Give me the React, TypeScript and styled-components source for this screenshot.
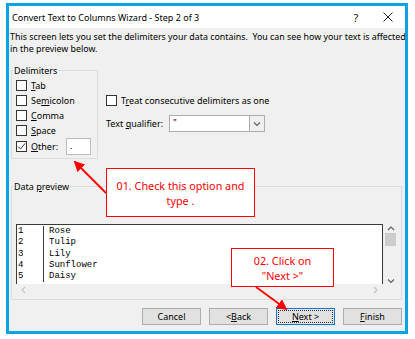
import React from 'react'
import styled, { createGlobalStyle } from 'styled-components'

const GlobalStyle = createGlobalStyle`
  html, body {
    margin: 0;
    padding: 0;
    background: #ffffff;
  }
  body {
    font-family: 'Noto Sans', 'Open Sans', sans-serif;
    color: #000;
  }
`

const Page = styled.div`
  width: 415px;
  height: 339px;
  padding: 3px 0 0 6px;
  box-sizing: border-box;
`

const Frame = styled.div`
  position: relative;
  width: 402px;
  height: 331px;
  box-sizing: border-box;
  border: 3px solid #0aa3e6;
  background: #f0f0f0;
  display: flex;
  flex-direction: column;
  overflow: hidden;
`

const TitleBar = styled.div`
  height: 22px;
  background: #ffffff;
  display: flex;
  align-items: center;
  padding-left: 3px;
  font-size: 9px;
`

const TitleText = styled.div`
  flex: 1;
`

const TitleControl = styled.div<{ $w: number }>`
  width: ${p => p.$w}px;
  display: flex;
  justify-content: center;
  align-items: center;
  font-size: 11px;
  color: #222;
`

const Body = styled.div`
  flex: 1;
  display: flex;
  flex-direction: column;
  padding: 4px 3px 0 2px;
  font-size: 9px;
`

const Intro = styled.p`
  margin: 0 0 0 -1px;
  line-height: 11.5px;
  font-size: 8.85px;
  white-space: nowrap;
`

const Middle = styled.div`
  display: flex;
  margin-top: 9px;
`

const Group = styled.fieldset<{ $w?: number }>`
  margin: 0;
  border: 1px solid #dcdcdc;
  box-sizing: border-box;
  ${p => (p.$w ? `width: ${p.$w}px;` : '')}
  min-width: 0;
`

const Legend = styled.legend`
  padding: 0 1px;
  margin-left: -3px;
  font-size: 9px;
  line-height: 13px;
`

const DelimGroup = styled(Group)`
  padding: 1px 0 3px 4px;
`

const CheckRow = styled.label<{ $h?: number }>`
  display: flex;
  align-items: center;
  height: ${p => p.$h ?? 15}px;
  gap: 4px;
  white-space: nowrap;
`

const Box = styled.span`
  width: 11px;
  height: 11px;
  box-sizing: border-box;
  border: 1px solid #333;
  background: #fff;
  display: inline-flex;
  align-items: center;
  justify-content: center;
  flex: none;
`

const OtherInput = styled.div`
  width: 25px;
  height: 17px;
  box-sizing: border-box;
  margin-left: 4px;
  border: 1px solid #bdbdbd;
  background: #fff;
  padding-left: 3px;
  line-height: 14px;
`

const Options = styled.div`
  display: flex;
  flex-direction: column;
  margin-left: 8px;
  padding-top: 29px;
`

const QualifierRow = styled.div`
  display: flex;
  align-items: center;
  margin-top: 7px;
  gap: 6px;
`

const Combo = styled.div`
  width: 96px;
  height: 17px;
  box-sizing: border-box;
  border: 1px solid #abadb3;
  background: #fff;
  display: flex;
`

const ComboValue = styled.div`
  flex: 1;
  padding-left: 3px;
  line-height: 13px;
`

const ComboButton = styled.div`
  width: 14px;
  border-left: 1px solid #abadb3;
  background: #f0f0f0;
  display: flex;
  align-items: center;
  justify-content: center;
`

const PreviewGroup = styled(Group)`
  margin-top: 21px;
  padding: 31px 3px 4px 4px;
`

const Preview = styled.div`
  display: grid;
  grid-template-columns: 1fr 15px;
  grid-template-rows: 60px 11px;
`

const PreviewText = styled.div`
  border: 1px solid #3a3a3a;
  border-bottom: none;
  background: #fff;
  padding-top: 1px;
  font-family: 'Liberation Mono', 'Courier New', monospace;
  font-size: 9px;
  line-height: 11.3px;
`

const PreviewLine = styled.div`
  display: flex;
  white-space: pre;
`

const NumCell = styled.div`
  width: 27px;
  padding-left: 1px;
  box-sizing: border-box;
  border-right: 1px solid #3a3a3a;
`

const NameCell = styled.div`
  padding-left: 5px;
`

const VScroll = styled.div`
  background: #f0f0f0;
  display: flex;
  flex-direction: column;
  align-items: center;
  padding-top: 1px;
`

const Thumb = styled.div`
  width: 11px;
  height: 13px;
  background: #cdcdcd;
  margin-top: 2px;
`

const Spacer = styled.div`
  flex: 1;
`

const HScroll = styled.div`
  background: #f0f0f0;
  display: flex;
  justify-content: space-between;
  align-items: center;
  padding: 0 4px;
`

const Corner = styled.div`
  background: #f0f0f0;
`

const Buttons = styled.div`
  display: flex;
  justify-content: flex-end;
  gap: 8px;
  margin-top: 8px;
`

const Button = styled.div<{ $focus?: boolean }>`
  width: 59px;
  height: 17px;
  box-sizing: border-box;
  background: #e1e1e1;
  border: 1px solid ${p => (p.$focus ? '#0078d7' : '#adadad')};
  display: flex;
  align-items: center;
  justify-content: center;
  font-size: 9px;
  position: relative;
  ${p =>
    p.$focus
      ? `&::after {
    content: '';
    position: absolute;
    inset: 1px;
    border: 1px dotted #333;
  }`
      : ''}
`

const Callout = styled.div<{ $l: number; $t: number; $w: number; $h: number }>`
  position: absolute;
  left: ${p => p.$l}px;
  top: ${p => p.$t}px;
  width: ${p => p.$w}px;
  height: ${p => p.$h}px;
  box-sizing: border-box;
  border: 1.5px solid #ff0000;
  background: #ffffff;
  color: #ff0000;
  font-size: 10.8px;
  display: flex;
  flex-direction: column;
  justify-content: center;
  align-items: center;
  text-align: center;
`

const Arrows = styled.svg`
  position: absolute;
  left: 0;
  top: 0;
  pointer-events: none;
`

const Check = () => (
  <svg width="9" height="9" viewBox="0 0 9 9">
    <path d="M1 4.5 L3.5 7 L8 1.5" fill="none" stroke="#333" strokeWidth="1" />
  </svg>
)

const Chevron = ({ up }: { up?: boolean }) => (
  <svg width="8" height="6" viewBox="0 0 8 6">
    <path
      d={up ? 'M1 5 L4 2 L7 5' : 'M1 1.5 L4 4.5 L7 1.5'}
      fill="none"
      stroke="#606060"
      strokeWidth="1.2"
    />
  </svg>
)

const delimiters = [
  { pre: '', key: 'T', post: 'ab' },
  { pre: 'Se', key: 'm', post: 'icolon' },
  { pre: '', key: 'C', post: 'omma' },
  { pre: '', key: 'S', post: 'pace' }
]

const rows = ['Rose', 'Tulip', 'Lily', 'Sunflower', 'Daisy']

export default function App() {
  return (
    <Page>
      <GlobalStyle />
      <Frame>
        <TitleBar>
          <TitleText>Convert Text to Columns Wizard - Step 2 of 3</TitleText>
          <TitleControl $w={48}>?</TitleControl>
          <TitleControl $w={16}>
            <svg width="10" height="10" viewBox="0 0 10 10">
              <path d="M0.5 0.5 L9.5 9.5 M9.5 0.5 L0.5 9.5" stroke="#222" strokeWidth="1" />
            </svg>
          </TitleControl>
          <TitleControl $w={9} />
        </TitleBar>
        <Body>
          <Intro>
            This screen lets you set the delimiters your data contains.&nbsp; You can see how your text is affected
            <br />
            in the preview below.
          </Intro>
          <Middle>
            <DelimGroup $w={87}>
              <Legend>Delimiters</Legend>
              {delimiters.map(d => (
                <CheckRow key={d.post}>
                  <Box />
                  <span>
                    {d.pre}
                    <u>{d.key}</u>
                    {d.post}
                  </span>
                </CheckRow>
              ))}
              <CheckRow $h={17}>
                <Box>
                  <Check />
                </Box>
                <span>
                  <u>O</u>ther:
                </span>
                <OtherInput>.</OtherInput>
              </CheckRow>
            </DelimGroup>
            <Options>
              <CheckRow>
                <Box />
                <span>
                  T<u>r</u>eat consecutive delimiters as one
                </span>
              </CheckRow>
              <QualifierRow>
                <span>
                  Text <u>q</u>ualifier:
                </span>
                <Combo>
                  <ComboValue>"</ComboValue>
                  <ComboButton>
                    <Chevron />
                  </ComboButton>
                </Combo>
              </QualifierRow>
            </Options>
          </Middle>
          <PreviewGroup>
            <Legend>
              Data <u>p</u>review
            </Legend>
            <Preview>
              <PreviewText>
                {rows.map((r, i) => (
                  <PreviewLine key={r}>
                    <NumCell>{i + 1}</NumCell>
                    <NameCell>{r}</NameCell>
                  </PreviewLine>
                ))}
              </PreviewText>
              <VScroll>
                <Chevron up />
                <Thumb />
                <Spacer />
                <Chevron />
              </VScroll>
              <HScroll>
                <svg width="6" height="8" viewBox="0 0 6 8">
                  <path d="M5 1 L2 4 L5 7" fill="none" stroke="#c4c4c4" strokeWidth="1.2" />
                </svg>
                <svg width="6" height="8" viewBox="0 0 6 8">
                  <path d="M1 1 L4 4 L1 7" fill="none" stroke="#c4c4c4" strokeWidth="1.2" />
                </svg>
              </HScroll>
              <Corner />
            </Preview>
          </PreviewGroup>
          <Buttons>
            <Button>Cancel</Button>
            <Button>
              &lt; <u>B</u>ack
            </Button>
            <Button $focus>
              <span>
                <u>N</u>ext &gt;
              </span>
            </Button>
            <Button>
              <u>F</u>inish
            </Button>
          </Buttons>
        </Body>
        <Callout $l={97} $t={162} $w={149} $h={49}>
          <div>01. Check this option and</div>
          <div>type .</div>
        </Callout>
        <Callout $l={222} $t={242} $w={103} $h={39}>
          <div>02. Click on</div>
          <div>"Next &gt;"</div>
        </Callout>
        <Arrows width="396" height="325" viewBox="0 0 396 325">
          <defs>
            <marker id="head" markerWidth="6" markerHeight="6" refX="5" refY="3" orient="auto" markerUnits="strokeWidth">
              <path d="M0 0 L6 3 L0 6 Z" fill="#ff0000" />
            </marker>
          </defs>
          <line x1="97" y1="187" x2="66" y2="156" stroke="#ff0000" strokeWidth="1.8" markerEnd="url(#head)" />
          <line x1="247" y1="281" x2="277" y2="303" stroke="#ff0000" strokeWidth="1.8" markerEnd="url(#head)" />
        </Arrows>
      </Frame>
    </Page>
  )
}
